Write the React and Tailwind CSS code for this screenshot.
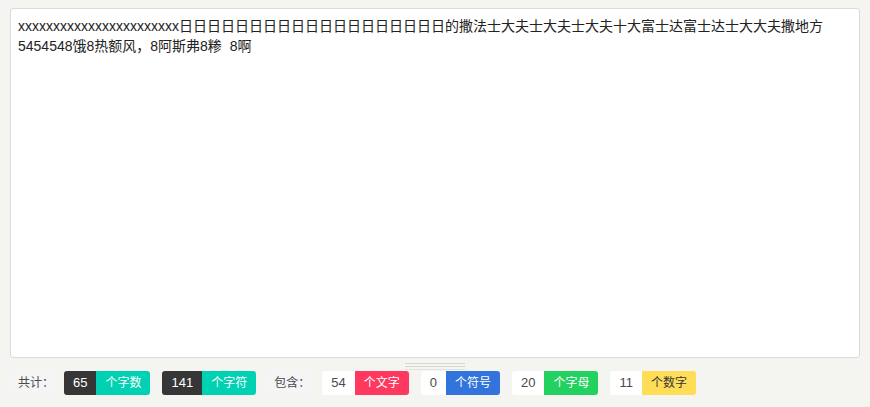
import React from 'react';

const font = { fontFamily: '"Liberation Sans", "Noto Sans CJK SC", sans-serif' };

const content =
  'xxxxxxxxxxxxxxxxxxxxxxx日日日日日日日日日日日日日日日日日日日的撒法士大夫士大夫士大夫十大富士达富士达士大大夫撒地方\n5454548饿8热额风，8阿斯弗8糁  8啊';

const stats = [
  { n: 54, label: '个文字', cls: 'bg-[#ff3860] text-white' },
  { n: 0, label: '个符号', cls: 'bg-[#3273dc] text-white' },
  { n: 20, label: '个字母', cls: 'bg-[#23d160] text-white' },
  { n: 11, label: '个数字', cls: 'bg-[#ffdd57] text-[#363636]' },
];

function Tag({ n, label, numCls, cls }) {
  return (
    <div className="flex h-6 text-xs rounded-[3px] overflow-hidden whitespace-nowrap">
      <span className={`flex items-center px-[9px] text-[13px] ${numCls}`}>{n}</span>
      <span className={`flex items-center px-[9px] ${cls}`}>{label}</span>
    </div>
  );
}

export default function App() {
  return (
    <div className="w-[870px] h-[407px] bg-[#f4f4f0] pt-2 px-[10px]" style={font}>
      <textarea
        readOnly
        defaultValue={content}
        className="block w-[850px] h-[350px] bg-white border border-[#dbdbdb] rounded-[3px] px-[7px] py-[7px] text-[14px] leading-5 text-[#222] resize-none outline-none"
        style={font}
      />
      <div className="h-[13px] flex flex-col items-center pt-[5px] gap-[2px]">
        <div className="w-[60px] h-px bg-[#d8d8d4]" />
        <div className="w-[60px] h-px bg-[#d8d8d4]" />
        <div className="w-[60px] h-px bg-[#e2e2de]" />
      </div>
      <div className="flex items-center text-[#4a4a4a]">
        <span className="flex items-center h-6 w-[46px] pl-2 text-xs bg-[#f5f5f5] rounded-[3px] whitespace-nowrap overflow-hidden">共计：</span>
        <div className="ml-2">
          <Tag n={65} label="个字数" numCls="bg-[#363636] text-white" cls="bg-[#00d1b2] text-white" />
        </div>
        <div className="ml-3">
          <Tag n={141} label="个字符" numCls="bg-[#363636] text-white" cls="bg-[#00d1b2] text-white" />
        </div>
        <span className="ml-[10px] flex items-center h-6 w-[46px] pl-2 text-xs bg-[#f5f5f5] rounded-[3px] whitespace-nowrap overflow-hidden">包含：</span>
        {stats.map((s, i) => (
          <div key={s.label} className={i === 0 ? 'ml-[10px]' : 'ml-3'}>
            <Tag n={s.n} label={s.label} numCls="bg-white text-[#4a4a4a]" cls={s.cls} />
          </div>
        ))}
      </div>
    </div>
  );
}
